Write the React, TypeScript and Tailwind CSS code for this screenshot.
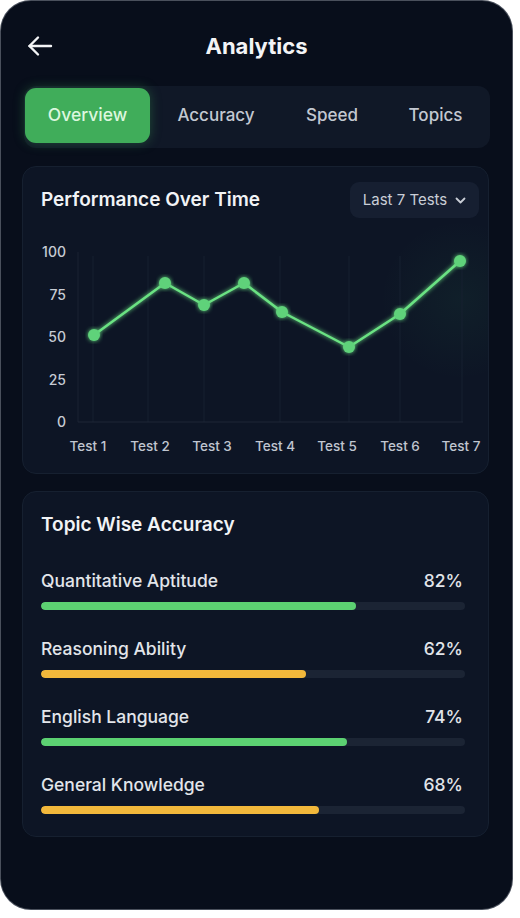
import React from "react";

const pts: [number, number][] = [
  [94, 335],
  [165, 283],
  [204, 305],
  [244, 283],
  [282, 312],
  [349, 347],
  [400, 314],
  [460, 261],
];

const yLabels: [string, number][] = [
  ["100", 251],
  ["75", 294],
  ["50", 336],
  ["25", 379],
  ["0", 421],
];

const xLabels: [string, number][] = [
  ["Test 1", 88],
  ["Test 2", 150],
  ["Test 3", 212],
  ["Test 4", 275],
  ["Test 5", 337],
  ["Test 6", 400],
  ["Test 7", 461],
];

const grid = [93, 148, 204, 280, 349, 400, 462];

const topics = [
  { name: "Quantitative Aptitude", pct: "82%", w: 315, color: "bg-[#5cd172]" },
  { name: "Reasoning Ability", pct: "62%", w: 265, color: "bg-[#f2b83b]" },
  { name: "English Language", pct: "74%", w: 306, color: "bg-[#5cd172]" },
  { name: "General Knowledge", pct: "68%", w: 278, color: "bg-[#f2b83b]" },
];

function Chart() {
  const d = pts.map((p, i) => `${i === 0 ? "M" : "L"}${p[0]} ${p[1]}`).join(" ");
  return (
    <svg width="467" height="244" viewBox="22 218 467 244" className="block">
      <defs>
        <radialGradient id="gw" cx="460" cy="300" r="80" gradientUnits="userSpaceOnUse">
          <stop offset="0" stopColor="#4ade80" stopOpacity="0.05" />
          <stop offset="1" stopColor="#4ade80" stopOpacity="0" />
        </radialGradient>
        <filter id="gl" x="-20%" y="-20%" width="140%" height="140%">
          <feGaussianBlur stdDeviation="2" result="b" />
          <feMerge>
            <feMergeNode in="b" />
            <feMergeNode in="SourceGraphic" />
          </feMerge>
        </filter>
      </defs>
      <rect x="370" y="218" width="119" height="244" fill="url(#gw)" />
      {grid.map((x) => (
        <line key={x} x1={x} y1={256} x2={x} y2={422} stroke="#172030" strokeWidth="1" />
      ))}
      <line x1={78} y1={252} x2={78} y2={422} stroke="#1a2232" strokeWidth="1" />
      <line x1={78} y1={422} x2={463} y2={422} stroke="#1e2737" strokeWidth="1" />
      <path d={d} fill="none" stroke="#6be283" strokeWidth="2.5" strokeLinejoin="round" filter="url(#gl)" />
      {pts.map((p, i) => (
        <circle key={i} cx={p[0]} cy={p[1]} r={6} fill="#5fd27a" filter="url(#gl)" />
      ))}
      {yLabels.map(([t, y]) => (
        <text
          key={t}
          x={66}
          y={y}
          textAnchor="end"
          dominantBaseline="central"
          fontSize="14"
          fontWeight="500"
          fill="#c6cbd4"
          fontFamily="Inter, 'Noto Sans', sans-serif"
        >
          {t}
        </text>
      ))}
      {xLabels.map(([t, x]) => (
        <text
          key={t}
          x={x}
          y={446}
          textAnchor="middle"
          dominantBaseline="central"
          fontSize="13.5"
          fontWeight="500"
          fill="#c0c6d0"
          fontFamily="Inter, 'Noto Sans', sans-serif"
        >
          {t}
        </text>
      ))}
    </svg>
  );
}

export default function App() {
  return (
    <div
      className="w-[520px] h-[918px] bg-white overflow-hidden"
      style={{ fontFamily: "Inter, 'Noto Sans', sans-serif" }}
    >
      <div className="ml-[1px] mt-[1px] w-[511px] h-[908px] rounded-[30px] bg-[#080e1b] shadow-[0_0_0_1px_#4a505c] overflow-hidden flex flex-col">
        {/* Header */}
        <div className="relative h-[36px] mt-[27px] flex items-center justify-center">
          <svg
            className="absolute left-[26px] top-[7px]"
            width="26"
            height="22"
            viewBox="0 0 26 22"
            fill="none"
            stroke="#f3f4f6"
            strokeWidth="2.4"
            strokeLinecap="round"
            strokeLinejoin="round"
          >
            <path d="M24 11H2.5" />
            <path d="M11 2.5L2.5 11L11 19.5" />
          </svg>
          <div className="text-[22px] font-bold text-[#f3f4f6] leading-none">Analytics</div>
        </div>

        {/* Tabs */}
        <div className="mt-[22px] ml-[23px] w-[466px] h-[62px] rounded-[12px] bg-[#101827] flex items-start pt-[2px] pl-[1px]">
          <div className="w-[125px] h-[55px] rounded-[11px] bg-[#40ad5a] flex items-center justify-center text-[17.5px] font-medium text-[#dcf7df] shadow-[0_0_12px_rgba(64,173,90,0.35)]">
            Overview
          </div>
          <div className="w-[132px] h-[55px] flex items-center justify-center text-[17px] font-medium text-[#c3c8d1]">
            Accuracy
          </div>
          <div className="w-[100px] h-[55px] flex items-center justify-center text-[17px] font-medium text-[#c3c8d1]">
            Speed
          </div>
          <div className="w-[107px] h-[55px] flex items-center justify-center text-[17px] font-medium text-[#c3c8d1]">
            Topics
          </div>
        </div>

        {/* Performance card */}
        <div className="mt-[18px] ml-[21px] w-[467px] h-[308px] rounded-[14px] bg-[#0d1525] border border-[#162030] overflow-hidden">
          <div className="mt-[15px] h-[36px] flex items-center justify-between pl-[18px] pr-[9px]">
            <div className="text-[19px] font-semibold text-[#f1f3f6]">Performance Over Time</div>
            <div className="w-[129px] h-[36px] rounded-[9px] bg-[#161f31] flex items-center justify-center gap-[8px] text-[15px] text-[#c9ced6]">
              <span>Last 7 Tests</span>
              <svg width="11" height="7" viewBox="0 0 11 7" fill="none" stroke="#c9ced6" strokeWidth="1.8" strokeLinecap="round" strokeLinejoin="round">
                <path d="M1.5 1.5L5.5 5.5L9.5 1.5" />
              </svg>
            </div>
          </div>
          <div className="-ml-[1px]">
            <Chart />
          </div>
        </div>

        {/* Topic wise card */}
        <div className="mt-[17px] ml-[21px] w-[467px] h-[346px] rounded-[14px] bg-[#0d1525] border border-[#162030] pt-[21px] pl-[18px] pr-[22px]">
          <div className="text-[19px] leading-[24px] font-semibold text-[#f1f3f6]">Topic Wise Accuracy</div>
          <div className="mt-[33px] flex flex-col gap-[28px]">
            {topics.map((t) => (
              <div key={t.name}>
                <div className="flex items-center justify-between h-[22px] text-[17.5px] font-medium text-[#e2e5ea]">
                  <span>{t.name}</span>
                  <span className="mr-[3px]">{t.pct}</span>
                </div>
                <div className="mt-[10px] h-[8px] w-[424px] rounded-full bg-[#1b2434] overflow-hidden">
                  <div className={`h-full rounded-full ${t.color}`} style={{ width: `${t.w}px` }} />
                </div>
              </div>
            ))}
          </div>
        </div>
      </div>
    </div>
  );
}
